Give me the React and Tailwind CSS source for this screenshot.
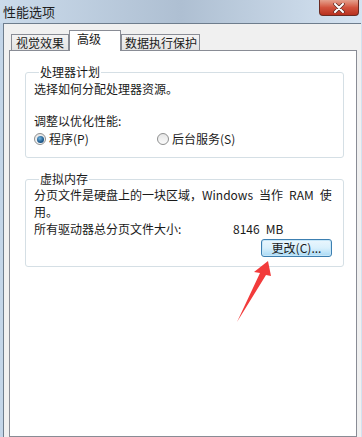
import React from 'react';

const font = "font-['Noto_Sans_CJK_SC','Noto_Sans',sans-serif]";

function Radio({ checked, label }) {
  return (
    <label className="flex items-center gap-[3px]">
      <span className="relative w-[12px] h-[12px] rounded-full border border-[#8e8f8f] bg-gradient-to-b from-[#e6e6e6] to-[#fbfbfb] flex items-center justify-center">
        {checked && (
          <span className="w-[7px] h-[7px] rounded-full bg-[radial-gradient(circle_at_40%_35%,#6fb3e0,#1f5a8c_60%,#0d3b66)]" />
        )}
      </span>
      <span>{label}</span>
    </label>
  );
}

export default function App() {
  return (
    <div className={`relative w-[362px] h-[437px] overflow-hidden flex flex-col text-[12px] text-[#1a1a1a] ${font} bg-gradient-to-r from-[#c3d5e8] via-[#b8cbdf] to-[#d3e2f1]`}>
      {/* title bar */}
      <div className="h-[23px] shrink-0 flex items-center pl-[3px] text-[13px] text-[#1e1e1e] bg-gradient-to-r from-[#cbdbeb] via-[#aebfd2] to-[#d6e4f2]">
        性能选项
      </div>
      <div className="absolute top-0 left-[319px] w-[40px] h-[16px] rounded-b-[4px] border border-t-0 border-[#6b2b22] bg-gradient-to-b from-[#e4a08e] via-[#d2533e] to-[#b8301f] flex items-center justify-center">
        <svg width="12" height="10" viewBox="0 0 12 10">
          <path d="M2 1 L10 9 M10 1 L2 9" stroke="#5a2a24" strokeWidth="3.4" strokeLinecap="round" />
          <path d="M2 1 L10 9 M10 1 L2 9" stroke="#ffffff" strokeWidth="2" strokeLinecap="round" />
        </svg>
      </div>

      {/* client area */}
      <div className="flex-1 ml-[3px] mr-[1px] bg-[#f0f0f0] border-l border-t border-[#6e7d8d] flex flex-col pl-[5px] pr-[4px] pt-[7px]">
        <div className="flex items-end h-[20px] -mb-[1px] relative z-10 pl-[2px]">
          <div className="h-[17px] w-[58px] border border-[#898c95] bg-gradient-to-b from-[#f3f3f3] to-[#e3e3e3] flex items-center justify-center">
            视觉效果
          </div>
          <div className="h-[21px] w-[52px] border border-b-0 border-[#898c95] bg-white pl-[7px] pt-[1px] leading-[14px]">
            高级
          </div>
          <div className="h-[17px] w-[79px] border border-[#898c95] bg-gradient-to-b from-[#f3f3f3] to-[#e3e3e3] flex items-center pl-[3px]">
            数据执行保护
          </div>
        </div>

        <div className="flex-1 bg-white border border-[#898c95] pl-[15px] pt-[14px]">
          <fieldset className="w-[319px] border border-[#d5dfe5] rounded-[3px] pl-[8px] pb-[11px]">
            <legend className="ml-[5px] px-[1px] leading-[14px]">处理器计划</legend>
            <div className="pt-[3px] leading-[14px]">选择如何分配处理器资源。</div>
            <div className="mt-[18px] leading-[14px]">调整以优化性能:</div>
            <div className="mt-[4px] flex leading-[14px]">
              <div className="w-[123px]">
                <Radio checked label="程序(P)" />
              </div>
              <Radio label="后台服务(S)" />
            </div>
          </fieldset>

          <fieldset className="mt-[14px] w-[319px] border border-[#d5dfe5] rounded-[3px] pl-[8px] pr-[11px] pb-[9px]">
            <legend className="ml-[5px] px-[1px] leading-[14px]">虚拟内存</legend>
            <div className="leading-[17px]">
              分页文件是硬盘上的一块区域，Windows<span className="inline-block w-[6px]" />当作<span className="inline-block w-[6px]" />RAM<span className="inline-block w-[6px]" />使
              <br />
              用。
            </div>
            <div className="flex leading-[17px]">
              <span className="w-[199px]">所有驱动器总分页文件大小:</span>
              <span>8146<span className="inline-block w-[6px]" />MB</span>
            </div>
            <div className="mt-[2px] flex justify-end">
              <button className="w-[71px] h-[18px] rounded-[3px] border border-[#3c7fb1] bg-gradient-to-b from-[#eaf6fd] via-[#d9f0fc] to-[#a7d9f5] leading-[14px] shadow-[inset_0_0_0_1px_#c6e6f8]">
                更改(C)...
              </button>
            </div>
          </fieldset>
        </div>
      </div>

      <svg className="absolute left-0 top-0 pointer-events-none" width="362" height="437" viewBox="0 0 362 437">
        <polygon points="268,261 254,272 260,273 237,322 266,275 271,276" fill="#f23b3b" />
      </svg>
    </div>
  );
}
